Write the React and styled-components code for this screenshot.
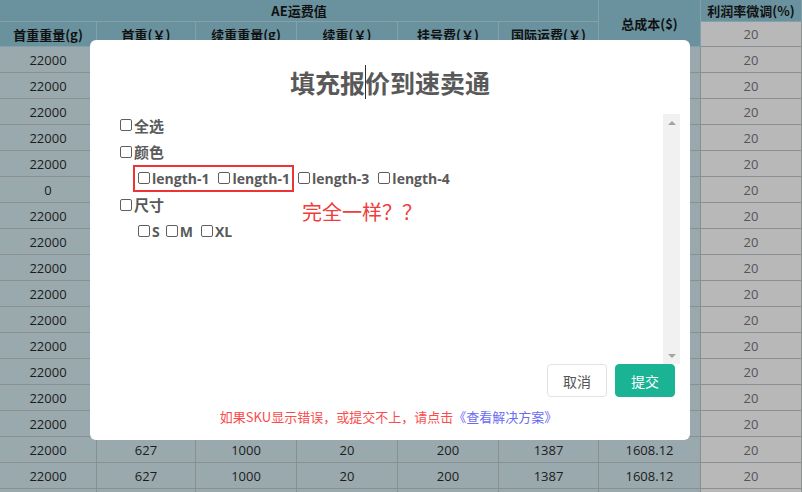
import React from "react";
import styled, { createGlobalStyle } from "styled-components";

const Global = createGlobalStyle`
  html, body { margin: 0; padding: 0; background: #9aa9ad; overflow: hidden; }
  body { font-family: "Open Sans", "Noto Sans CJK SC", sans-serif; }
  * { box-sizing: border-box; }
`;

const Page = styled.div`
  position: relative;
  width: 802px;
  height: 492px;
  overflow: hidden;
`;

const Grid = styled.div`
  display: grid;
  grid-template-columns: 97px 99px 101px 101px 101px 100px 102px 101px;
  grid-template-rows: 22px 25px;
  grid-auto-rows: 26px;
  width: 802px;
`;

const HeadCell = styled.div`
  grid-column: ${(p) => p.$col || "auto"};
  grid-row: ${(p) => p.$row || "auto"};
  background: #6a929e;
  color: #111;
  font-family: "Noto Sans CJK SC", "Open Sans", sans-serif;
  font-weight: 700;
  font-size: 13px;
  display: flex;
  align-items: center;
  justify-content: center;
  border-right: 1px solid #84a0a8;
  border-bottom: 1px solid #84a0a8;
  white-space: nowrap;
`;

const Cell = styled.div`
  background: ${(p) => (p.$muted ? "#b8b8b8" : "#9aa9ad")};
  color: ${(p) => (p.$muted ? "#555" : "#1c1c1c")};
  font-family: "Open Sans", "Noto Sans CJK SC", sans-serif;
  font-size: 13px;
  display: flex;
  align-items: center;
  justify-content: center;
  border-right: 1px solid #8a8f90;
  border-bottom: 1px solid #8a8f90;
`;

const Modal = styled.div`
  position: absolute;
  left: 90px;
  top: 40px;
  width: 600px;
  height: 400px;
  background: #fff;
  border-radius: 6px;
  display: flex;
  flex-direction: column;
  padding: 25px 15px 0 30px;
`;

const Title = styled.h1`
  margin: 0 0 0 -15px;
  height: 34px;
  line-height: 34px;
  text-align: center;
  font-family: "Noto Sans CJK SC", sans-serif;
  font-weight: 700;
  font-size: 25px;
  color: #595959;
`;

const Caret = styled.span`
  display: inline-block;
  width: 0;
  height: 34px;
  border-left: 1px solid #333;
  vertical-align: top;
  margin-right: -1px;
`;

const ScrollArea = styled.div`
  margin-top: 15px;
  margin-right: -5px;
  height: 250px;
  display: flex;
`;

const ScrollContent = styled.div`
  position: relative;
  flex: 1;
  margin-top: -2px;
`;

const ScrollBar = styled.div`
  width: 17px;
  background: #f1f1f1;
  display: flex;
  flex-direction: column;
  justify-content: space-between;
  align-items: center;
  padding: 7px 0 6px;
`;

const Arrow = styled.span`
  width: 0;
  height: 0;
  border-left: 4px solid transparent;
  border-right: 4px solid transparent;
  ${(p) =>
    p.$down
      ? "border-top: 4px solid #a3a3a3;"
      : "border-bottom: 4px solid #a3a3a3;"}
`;

const Row = styled.div`
  height: 26.5px;
  display: flex;
  align-items: center;
  padding-left: ${(p) => p.$indent || 0}px;
`;

const Item = styled.label`
  display: inline-flex;
  align-items: center;
  font-family: "Open Sans", "Noto Sans CJK SC", sans-serif;
  font-weight: 700;
  font-size: ${(p) => (p.$big ? "15px" : "14px")};
  color: #5a5a5a;
  margin-right: ${(p) => (p.$gap != null ? p.$gap : 9)}px;
  white-space: nowrap;
`;

const Box = styled.span`
  display: inline-block;
  width: 12px;
  height: 12px;
  border: 1px solid #5f5f5f;
  border-radius: 2px;
  margin-right: 2px;
  background: #fff;
`;

const Highlight = styled.span`
  display: inline-flex;
  align-items: center;
  height: 27px;
  border: 2px solid #ec3434;
  padding: 0 2px 0 3px;
  margin-right: 4px;
`;

const Note = styled.span`
  position: absolute;
  left: 182px;
  top: 88px;
  font-family: "Noto Sans CJK SC", sans-serif;
  font-size: 20px;
  line-height: 24px;
  color: #f23b3b;
`;

const Actions = styled.div`
  display: flex;
  justify-content: flex-end;
  gap: 8px;
`;

const Button = styled.button`
  width: 60px;
  height: 33px;
  border-radius: 4px;
  font-family: "Noto Sans CJK SC", sans-serif;
  font-size: 14px;
  cursor: pointer;
  border: 1px solid ${(p) => (p.$primary ? "#1ab394" : "#e2e2e2")};
  background: ${(p) => (p.$primary ? "#1ab394" : "#fff")};
  color: ${(p) => (p.$primary ? "#fff" : "#555")};
  padding: 0;
`;

const Footer = styled.p`
  margin: 10px 0 0 -18px;
  text-align: center;
  font-family: "Noto Sans CJK SC", sans-serif;
  font-size: 13px;
  line-height: 20px;
  color: #fb4b4b;
`;

const Link = styled.a`
  color: #6b6bf2;
  text-decoration: none;
`;

const subHeads = ["首重重量(g)", "首重(￥)", "续重重量(g)", "续重(￥)", "挂号费(￥)", "国际运费(￥)"];
const rest = ["627", "1000", "20", "200", "1387", "1608.12"];

export default function App() {
  const rows = Array.from({ length: 18 }, (_, i) => (i === 5 ? "0" : "22000"));
  return (
    <Page>
      <Global />
      <Grid>
        <HeadCell $col="1 / 7" $row="1">AE运费值</HeadCell>
        <HeadCell $col="7" $row="1 / 3">总成本($)</HeadCell>
        <HeadCell $col="8" $row="1">利润率微调(%)</HeadCell>
        {subHeads.map((h) => (
          <HeadCell key={h} $row="2">{h}</HeadCell>
        ))}
        <Cell $muted>20</Cell>
        {rows.map((first, i) => (
          <React.Fragment key={i}>
            <Cell>{first}</Cell>
            {rest.map((v, j) => (
              <Cell key={j}>{v}</Cell>
            ))}
            <Cell $muted>20</Cell>
          </React.Fragment>
        ))}
      </Grid>

      <Modal>
        <Title>
          填充报<Caret />价到速卖通
        </Title>
        <ScrollArea>
          <ScrollContent>
            <Row>
              <Item $big><Box />全选</Item>
            </Row>
            <Row>
              <Item $big><Box />颜色</Item>
            </Row>
            <Row $indent={13}>
              <Highlight>
                <Item><Box />length-1</Item>
                <Item $gap={0}><Box />length-1</Item>
              </Highlight>
              <Item><Box />length-3</Item>
              <Item><Box />length-4</Item>
            </Row>
            <Row>
              <Item $big><Box />尺寸</Item>
            </Row>
            <Row $indent={18}>
              <Item $gap={6}><Box />S</Item>
              <Item $gap={8}><Box />M</Item>
              <Item><Box />XL</Item>
            </Row>
            <Note>完全一样？？</Note>
          </ScrollContent>
          <ScrollBar>
            <Arrow />
            <Arrow $down />
          </ScrollBar>
        </ScrollArea>
        <Actions>
          <Button>取消</Button>
          <Button $primary>提交</Button>
        </Actions>
        <Footer>
          如果SKU显示错误，或提交不上，请点击<Link href="#">《查看解决方案》</Link>
        </Footer>
      </Modal>
    </Page>
  );
}
